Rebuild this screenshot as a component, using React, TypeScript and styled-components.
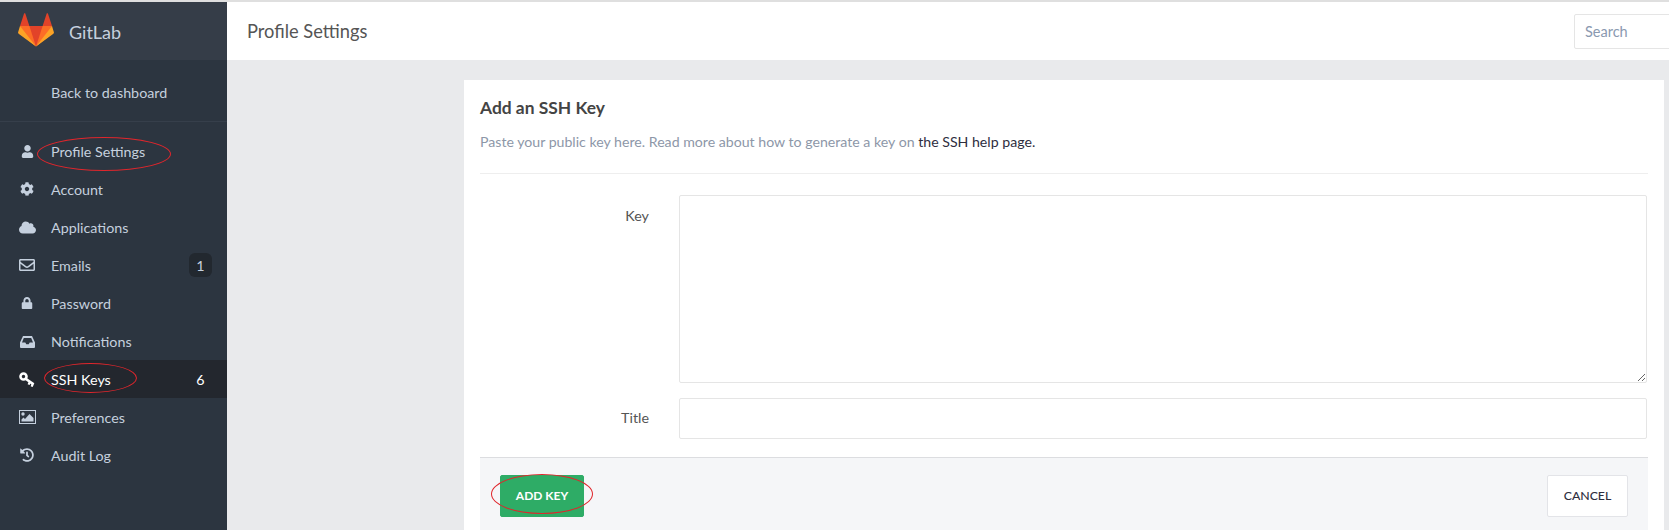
import React from "react";
import styled, { createGlobalStyle } from "styled-components";
import { FaUser, FaCog, FaCloud, FaRegEnvelope, FaLock, FaHistory } from "react-icons/fa";

const FONT = `"Lato", "Noto Sans", sans-serif`;

const GlobalStyle = createGlobalStyle`
  html, body {
    margin: 0;
    height: 100%;
    overflow: hidden;
  }
  body {
    background: #e9eaec;
    border-top: 2px solid #dfdfdf;
    box-sizing: border-box;
    font-family: ${FONT};
  }
  #root {
    height: 100%;
  }
`;

const Layout = styled.div`
  display: flex;
  height: 528px;
  overflow: hidden;
`;

const Sidebar = styled.aside`
  flex: 0 0 227px;
  background: #2c3540;
  color: #c5d0de;
  font-size: 14.3px;
`;

const Brand = styled.div`
  display: flex;
  align-items: center;
  gap: 15px;
  height: 58px;
  padding-left: 18px;
  background: #353d48;
  font-size: 18px;
  span {
    margin-top: 2px;
  }
  svg {
    margin-top: -2px;
  }
`;

const BackLink = styled.div`
  height: 62px;
  padding: 4px 0 0 51px;
  display: flex;
  align-items: center;
  border-bottom: 1px solid #363f4b;
  box-sizing: border-box;
  margin-bottom: 10px;
`;

const NavItem = styled.div<{ $active?: boolean }>`
  position: relative;
  display: flex;
  align-items: center;
  height: 38px;
  padding: 0 15px 0 19px;
  background: ${(p) => (p.$active ? "#23272e" : "transparent")};
  color: ${(p) => (p.$active ? "#ffffff" : "#c5d0de")};
`;

const NavIcon = styled.span`
  display: flex;
  justify-content: center;
  flex: 0 0 16px;
  min-width: 0;
  margin-right: 16px;
  svg {
    flex-shrink: 0;
  }
`;

const NavLabel = styled.span`
  flex: 1;
`;

const Count = styled.span<{ $boxed?: boolean }>`
  width: 23px;
  height: 24px;
  display: flex;
  align-items: center;
  justify-content: center;
  border-radius: 6px;
  background: ${(p) => (p.$boxed ? "#22282f" : "transparent")};
`;

const Ellipse = styled.span<{ $left: number; $top: number; $w: number; $h: number }>`
  position: absolute;
  left: ${(p) => p.$left}px;
  top: ${(p) => p.$top}px;
  width: ${(p) => p.$w}px;
  height: ${(p) => p.$h}px;
  box-sizing: border-box;
  border: 1px solid #e0262c;
  border-radius: 50%;
  pointer-events: none;
`;

const Main = styled.main`
  flex: 1;
  min-width: 0;
  display: flex;
  flex-direction: column;
`;

const TopBar = styled.header`
  flex: 0 0 58px;
  display: flex;
  align-items: center;
  justify-content: space-between;
  background: #ffffff;
  padding-left: 20px;
  overflow: hidden;
`;

const PageTitle = styled.div`
  font-size: 18.3px;
  color: #555555;
`;

const SearchBox = styled.input`
  width: 110px;
  height: 35px;
  margin-right: -15px;
  box-sizing: border-box;
  padding: 0 10px;
  border: 1px solid #e5e5e5;
  border-radius: 2px;
  font-family: ${FONT};
  font-size: 14.5px;
  &::placeholder {
    color: #8a99b0;
    opacity: 1;
  }
`;

const Content = styled.div`
  flex: 1;
  padding: 20px 5px 0 237px;
  display: flex;
  min-height: 0;
`;

const Card = styled.section`
  flex: 1;
  min-width: 0;
  display: flex;
  flex-direction: column;
  background: #ffffff;
  padding: 16px 16px 0;
`;

const CardTitle = styled.h3`
  margin: 0 0 12px;
  font-size: 17.4px;
  line-height: 24px;
  font-weight: 700;
  color: #444444;
`;

const Intro = styled.p`
  margin: 0;
  font-size: 14.15px;
  line-height: 20px;
  color: #8d97a8;
`;

const HelpLink = styled.a`
  color: #2e2e3e;
`;

const Divider = styled.hr`
  margin: 21px 0;
  border: 0;
  border-top: 1px solid #eeeeee;
`;

const FormRow = styled.div`
  display: grid;
  grid-template-columns: 169px 1fr;
  column-gap: 30px;
  margin: 0 1px 15px 0;
`;

const FieldLabel = styled.label<{ $pad: number }>`
  text-align: right;
  font-size: 14.3px;
  line-height: 20px;
  color: #555555;
  padding-top: ${(p) => p.$pad}px;
`;

const KeyArea = styled.textarea`
  display: block;
  width: 100%;
  height: 188px;
  box-sizing: border-box;
  border: 1px solid #e5e5e5;
  border-radius: 2px;
  resize: vertical;
  outline: none;
`;

const TitleInput = styled.input`
  display: block;
  width: 100%;
  height: 41px;
  box-sizing: border-box;
  border: 1px solid #e5e5e5;
  border-radius: 2px;
  outline: none;
`;

const Actions = styled.div`
  flex: 1;
  display: flex;
  justify-content: space-between;
  align-items: flex-start;
  margin-top: 3px;
  padding: 17px 20px 0;
  background: #f5f6f8;
  border-top: 1px solid #dcdde0;
`;

const ActionSlot = styled.div`
  position: relative;
`;

const Button = styled.button<{ $primary?: boolean }>`
  height: 42px;
  width: ${(p) => (p.$primary ? 84 : 81)}px;
  padding: 0 0 2px;
  border: 1px solid ${(p) => (p.$primary ? "#2eac66" : "#e3e4e8")};
  border-radius: 2px;
  background: ${(p) => (p.$primary ? "#2eac66" : "#ffffff")};
  color: ${(p) => (p.$primary ? "#ffffff" : "#2e2e3e")};
  font-family: ${FONT};
  font-size: ${(p) => (p.$primary ? 12 : 12.3)}px;
  font-weight: ${(p) => (p.$primary ? 700 : 500)};
  text-transform: uppercase;
`;

const Tanuki = () => (
  <svg width="36" height="36" viewBox="0 0 36 36">
    <path fill="#e24329" d="M2 14l9.38 9v-9l-4-12.28c-.205-.632-1.176-.632-1.38 0z" />
    <path fill="#e24329" d="M34 14l-9.38 9v-9l4-12.28c.205-.632 1.176-.632 1.38 0z" />
    <path fill="#e24329" d="M18,34.38 3,14 33,14 Z" />
    <path fill="#fc6d26" d="M18,34.38 11.38,14 2,14 6,25Z" />
    <path fill="#fc6d26" d="M18,34.38 24.62,14 34,14 30,25Z" />
    <path fill="#fca326" d="M2 14L.1 20.16c-.18.565 0 1.2.5 1.56l17.42 12.66z" />
    <path fill="#fca326" d="M34 14l1.9 6.16c.18.565 0 1.2-.5 1.56L18 34.38z" />
  </svg>
);

const InboxIcon = () => (
  <svg width="15" height="13" viewBox="0 0 15 13" fill="currentColor">
    <path
      fillRule="evenodd"
      d="M3 1h9l3 6.5V12a1 1 0 0 1-1 1H1a1 1 0 0 1-1-1V7.500zM3.800 3 2 7.500h3.300l1 1.800h2.400l1-1.800H13L11.200 3z"
    />
  </svg>
);

const KeyIcon = () => (
  <svg width="16" height="15" viewBox="0 0 16 15" fill="none" stroke="currentColor">
    <circle cx="4.500" cy="4.500" r="3" strokeWidth="2.600" />
    <path d="M7 7 14.600 12.400" strokeWidth="2.600" />
    <path d="M10.800 10 9.600 12.600M13.800 12 12.600 14.600" strokeWidth="2.200" />
  </svg>
);

const ImageIcon = () => (
  <svg width="17" height="14" viewBox="0 0 17 14">
    <rect x="0.500" y="0.500" width="16" height="13" fill="none" stroke="currentColor" />
    <circle cx="4" cy="4" r="1.700" fill="currentColor" />
    <path d="M2.500 11.500V9.500l2-2 1.500 1.500 4.500-5 4 4v3.500z" fill="currentColor" />
  </svg>
);

const items = [
  { label: "Profile Settings", icon: <FaUser size={13} />, ring: { $left: 37, $top: 5, $w: 134, $h: 34 } },
  { label: "Account", icon: <FaCog size={14} /> },
  { label: "Applications", icon: <FaCloud size={17} /> },
  { label: "Emails", icon: <FaRegEnvelope size={16} />, count: "1", boxed: true },
  { label: "Password", icon: <FaLock size={12} /> },
  { label: "Notifications", icon: <InboxIcon /> },
  {
    label: "SSH Keys",
    icon: <KeyIcon />,
    count: "6",
    active: true,
    ring: { $left: 44, $top: 3, $w: 93, $h: 30 },
  },
  { label: "Preferences", icon: <ImageIcon /> },
  { label: "Audit Log", icon: <FaHistory size={14} /> },
];

export default function App() {
  return (
    <Layout>
      <GlobalStyle />
      <Sidebar>
        <Brand>
          <Tanuki />
          <span>GitLab</span>
        </Brand>
        <BackLink>Back to dashboard</BackLink>
        {items.map((item) => (
          <NavItem key={item.label} $active={item.active}>
            <NavIcon>{item.icon}</NavIcon>
            <NavLabel>{item.label}</NavLabel>
            {item.count && <Count $boxed={item.boxed}>{item.count}</Count>}
            {item.ring && <Ellipse {...item.ring} />}
          </NavItem>
        ))}
      </Sidebar>
      <Main>
        <TopBar>
          <PageTitle>Profile Settings</PageTitle>
          <SearchBox placeholder="Search" />
        </TopBar>
        <Content>
          <Card>
            <CardTitle>Add an SSH Key</CardTitle>
            <Intro>
              Paste your public key here. Read more about how to generate a key on{" "}
              <HelpLink>the SSH help page.</HelpLink>
            </Intro>
            <Divider />
            <FormRow>
              <FieldLabel $pad={11}>Key</FieldLabel>
              <KeyArea />
            </FormRow>
            <FormRow>
              <FieldLabel $pad={10}>Title</FieldLabel>
              <TitleInput />
            </FormRow>
            <Actions>
              <ActionSlot>
                <Button $primary>Add key</Button>
                <Ellipse $left={-9} $top={-1} $w={102} $h={40} />
              </ActionSlot>
              <Button>Cancel</Button>
            </Actions>
          </Card>
        </Content>
      </Main>
    </Layout>
  );
}
